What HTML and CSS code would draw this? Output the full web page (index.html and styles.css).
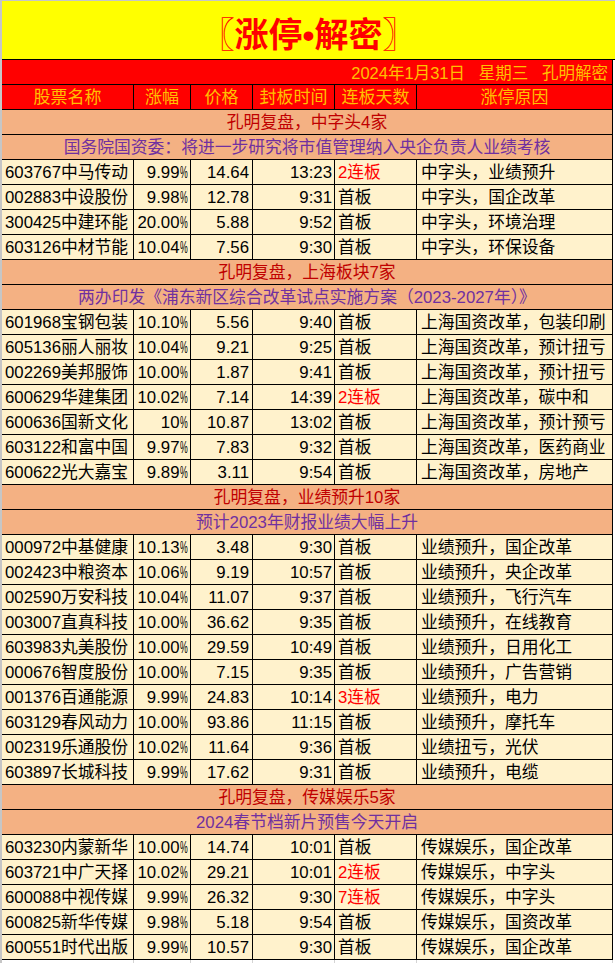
FILE: index.html
```html
<!DOCTYPE html>
<html lang="zh-CN">
<head>
<meta charset="utf-8">
<title>涨停•解密</title>
<link rel="stylesheet" href="styles.css">
</head>
<body>
<div class="sheet">
  <div class="title"><span class="title-text">〖涨停•解密〗</span></div>
  <div class="row full date"><div class="cell">2024年1月31日&nbsp;&nbsp;&nbsp;星期三&nbsp;&nbsp;&nbsp;孔明解密</div></div>
  <div class="row head">
    <div class="cell">股票名称</div><div class="cell">涨幅</div><div class="cell">价格</div><div class="cell">封板时间</div><div class="cell">连板天数</div><div class="cell">涨停原因</div>
  </div>

  <div class="row full sec"><div class="cell">孔明复盘，中字头4家</div></div>
  <div class="row full sub"><div class="cell">国务院国资委：将进一步研究将市值管理纳入央企负责人业绩考核</div></div>
  <div class="row data"><div class="cell">603767中马传动</div><div class="cell">9.99<span class="pct">%</span></div><div class="cell">14.64</div><div class="cell">13:23</div><div class="cell hot">2连板</div><div class="cell">中字头，业绩预升</div></div>
  <div class="row data"><div class="cell">002883中设股份</div><div class="cell">9.98<span class="pct">%</span></div><div class="cell">12.78</div><div class="cell">9:31</div><div class="cell">首板</div><div class="cell">中字头，国企改革</div></div>
  <div class="row data"><div class="cell">300425中建环能</div><div class="cell">20.00<span class="pct">%</span></div><div class="cell">5.88</div><div class="cell">9:52</div><div class="cell">首板</div><div class="cell">中字头，环境治理</div></div>
  <div class="row data"><div class="cell">603126中材节能</div><div class="cell">10.04<span class="pct">%</span></div><div class="cell">7.56</div><div class="cell">9:30</div><div class="cell">首板</div><div class="cell">中字头，环保设备</div></div>

  <div class="row full sec"><div class="cell">孔明复盘，上海板块7家</div></div>
  <div class="row full sub"><div class="cell">两办印发《浦东新区综合改革试点实施方案（2023-2027年）》</div></div>
  <div class="row data"><div class="cell">601968宝钢包装</div><div class="cell">10.10<span class="pct">%</span></div><div class="cell">5.56</div><div class="cell">9:40</div><div class="cell">首板</div><div class="cell">上海国资改革，包装印刷</div></div>
  <div class="row data"><div class="cell">605136丽人丽妆</div><div class="cell">10.04<span class="pct">%</span></div><div class="cell">9.21</div><div class="cell">9:25</div><div class="cell">首板</div><div class="cell">上海国资改革，预计扭亏</div></div>
  <div class="row data"><div class="cell">002269美邦服饰</div><div class="cell">10.00<span class="pct">%</span></div><div class="cell">1.87</div><div class="cell">9:41</div><div class="cell">首板</div><div class="cell">上海国资改革，预计扭亏</div></div>
  <div class="row data"><div class="cell">600629华建集团</div><div class="cell">10.02<span class="pct">%</span></div><div class="cell">7.14</div><div class="cell">14:39</div><div class="cell hot">2连板</div><div class="cell">上海国资改革，碳中和</div></div>
  <div class="row data"><div class="cell">600636国新文化</div><div class="cell">10<span class="pct">%</span></div><div class="cell">10.87</div><div class="cell">13:02</div><div class="cell">首板</div><div class="cell">上海国资改革，预计预亏</div></div>
  <div class="row data"><div class="cell">603122和富中国</div><div class="cell">9.97<span class="pct">%</span></div><div class="cell">7.83</div><div class="cell">9:32</div><div class="cell">首板</div><div class="cell">上海国资改革，医药商业</div></div>
  <div class="row data"><div class="cell">600622光大嘉宝</div><div class="cell">9.89<span class="pct">%</span></div><div class="cell">3.11</div><div class="cell">9:54</div><div class="cell">首板</div><div class="cell">上海国资改革，房地产</div></div>

  <div class="row full sec"><div class="cell">孔明复盘，业绩预升10家</div></div>
  <div class="row full sub"><div class="cell">预计2023年财报业绩大幅上升</div></div>
  <div class="row data"><div class="cell">000972中基健康</div><div class="cell">10.13<span class="pct">%</span></div><div class="cell">3.48</div><div class="cell">9:30</div><div class="cell">首板</div><div class="cell">业绩预升，国企改革</div></div>
  <div class="row data"><div class="cell">002423中粮资本</div><div class="cell">10.06<span class="pct">%</span></div><div class="cell">9.19</div><div class="cell">10:57</div><div class="cell">首板</div><div class="cell">业绩预升，央企改革</div></div>
  <div class="row data"><div class="cell">002590万安科技</div><div class="cell">10.04<span class="pct">%</span></div><div class="cell">11.07</div><div class="cell">9:37</div><div class="cell">首板</div><div class="cell">业绩预升，飞行汽车</div></div>
  <div class="row data"><div class="cell">003007直真科技</div><div class="cell">10.00<span class="pct">%</span></div><div class="cell">36.62</div><div class="cell">9:35</div><div class="cell">首板</div><div class="cell">业绩预升，在线教育</div></div>
  <div class="row data"><div class="cell">603983丸美股份</div><div class="cell">10.00<span class="pct">%</span></div><div class="cell">29.59</div><div class="cell">10:49</div><div class="cell">首板</div><div class="cell">业绩预升，日用化工</div></div>
  <div class="row data"><div class="cell">000676智度股份</div><div class="cell">10.00<span class="pct">%</span></div><div class="cell">7.15</div><div class="cell">9:35</div><div class="cell">首板</div><div class="cell">业绩预升，广告营销</div></div>
  <div class="row data"><div class="cell">001376百通能源</div><div class="cell">9.99<span class="pct">%</span></div><div class="cell">24.83</div><div class="cell">10:14</div><div class="cell hot">3连板</div><div class="cell">业绩预升，电力</div></div>
  <div class="row data"><div class="cell">603129春风动力</div><div class="cell">10.00<span class="pct">%</span></div><div class="cell">93.86</div><div class="cell">11:15</div><div class="cell">首板</div><div class="cell">业绩预升，摩托车</div></div>
  <div class="row data"><div class="cell">002319乐通股份</div><div class="cell">10.02<span class="pct">%</span></div><div class="cell">11.64</div><div class="cell">9:36</div><div class="cell">首板</div><div class="cell">业绩扭亏，光伏</div></div>
  <div class="row data"><div class="cell">603897长城科技</div><div class="cell">9.99<span class="pct">%</span></div><div class="cell">17.62</div><div class="cell">9:31</div><div class="cell">首板</div><div class="cell">业绩预升，电缆</div></div>

  <div class="row full sec"><div class="cell">孔明复盘，传媒娱乐5家</div></div>
  <div class="row full sub"><div class="cell">2024春节档新片预售今天开启</div></div>
  <div class="row data"><div class="cell">603230内蒙新华</div><div class="cell">10.00<span class="pct">%</span></div><div class="cell">14.74</div><div class="cell">10:01</div><div class="cell">首板</div><div class="cell">传媒娱乐，国企改革</div></div>
  <div class="row data"><div class="cell">603721中广天择</div><div class="cell">10.02<span class="pct">%</span></div><div class="cell">29.21</div><div class="cell">10:01</div><div class="cell hot">2连板</div><div class="cell">传媒娱乐，中字头</div></div>
  <div class="row data"><div class="cell">600088中视传媒</div><div class="cell">9.99<span class="pct">%</span></div><div class="cell">26.32</div><div class="cell">9:30</div><div class="cell hot">7连板</div><div class="cell">传媒娱乐，中字头</div></div>
  <div class="row data"><div class="cell">600825新华传媒</div><div class="cell">9.98<span class="pct">%</span></div><div class="cell">5.18</div><div class="cell">9:54</div><div class="cell">首板</div><div class="cell">传媒娱乐，国资改革</div></div>
  <div class="row data"><div class="cell">600551时代出版</div><div class="cell">9.99<span class="pct">%</span></div><div class="cell">10.57</div><div class="cell">9:30</div><div class="cell">首板</div><div class="cell">传媒娱乐，国企改革</div></div>
  <div class="row ghost"><div class="cell"></div><div class="cell"></div><div class="cell"></div><div class="cell"></div><div class="cell"></div><div class="cell"></div></div>
</div>
</body>
</html>
```

FILE: styles.css
```css
* { box-sizing: border-box; margin: 0; padding: 0; }
html, body { background: #fff; }
body {
  width: 615px;
  height: 963px;
  overflow: hidden;
  font-family: "Liberation Sans", "Noto Sans CJK SC", sans-serif;
  font-size: 16.8px;
  color: #000;
}
.sheet {
  border-top: 1px solid #c6c6c6;
  border-left: 2px solid #c6c6c6;
}
.title {
  height: 59px;
  width: 613px;
  background: #ffff00;
  border-bottom: 1px solid #000;
  color: #ff0000;
  font-family: "Liberation Sans", "Noto Sans CJK SC", sans-serif;
  font-weight: bold;
  font-size: 34px;
  line-height: 34px;
  padding-top: 17px;
  text-align: center;
}
.title-text {
  display: inline-block;
}
.row {
  display: grid;
  grid-template-columns: 132px 57px 62px 82px 82px 196px;
  width: 611px;
  height: 25px;
}
.row.full { grid-template-columns: 611px; }
.cell {
  display: flex;
  align-items: flex-end;
  height: 25px;
  line-height: 20px;
  padding-bottom: 1px;
  border-right: 1px solid #000;
  border-bottom: 1px solid #000;
  white-space: nowrap;
  overflow: hidden;
}
.pct {
  display: inline-block;
  width: 7.5px;
  transform: scaleX(0.52);
  transform-origin: left center;
}
.date .cell {
  background: #ff0000;
  color: #ffc000;
  font-size: 16.5px;
  justify-content: flex-end;
  padding-right: 4px;
}
.head .cell {
  background: #ff0000;
  color: #ffc000;
  font-size: 17px;
  justify-content: center;
}
.sec .cell, .sub .cell {
  background: #f4b183;
  justify-content: center;
}
.sec .cell { color: #c00000; }
.sub .cell { color: #7030a0; }
.data .cell { background: #fff2cc; }
.data .cell:nth-child(1) { padding-left: 3px; }
.data .cell:nth-child(2) { justify-content: flex-end; padding-right: 3px; }
.data .cell:nth-child(3) { justify-content: flex-end; padding-right: 3px; }
.data .cell:nth-child(4) { justify-content: flex-end; padding-right: 2px; }
.data .cell:nth-child(5) { padding-left: 3px; }
.data .cell:nth-child(6) { padding-left: 4px; }
.data .cell.hot { color: #ff0000; }
.ghost { height: 4px; }
.ghost .cell {
  height: 4px;
  border-right: 1px solid #d4d4d4;
  border-bottom: none;
}
```
